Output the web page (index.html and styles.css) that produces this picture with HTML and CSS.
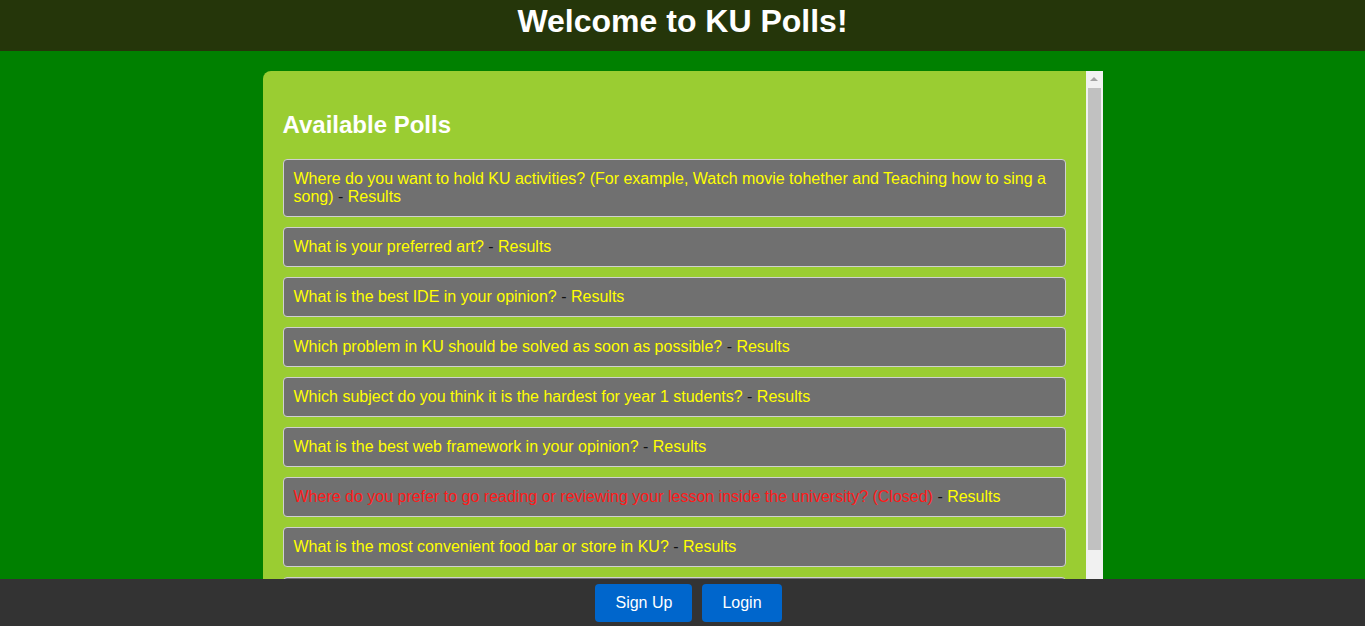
FILE: index.html
```html
<!DOCTYPE html>
<html lang="en">
<head>
<meta charset="utf-8">
<title>KU Polls</title>
<link rel="stylesheet" href="styles.css">
</head>
<body>
<header class="site-header">
  <h1 class="site-title">Welcome to KU Polls!</h1>
</header>
<main class="polls-box">
  <div class="polls-content">
    <h2 class="polls-heading">Available Polls</h2>
    <ul class="poll-list">
      <li class="poll-item"><a class="poll-link" href="#">Where do you want to hold KU activities? (For example, Watch movie tohether and Teaching how to sing a song)</a> - <a class="poll-link" href="#">Results</a></li>
      <li class="poll-item"><a class="poll-link" href="#">What is your preferred art?</a> - <a class="poll-link" href="#">Results</a></li>
      <li class="poll-item"><a class="poll-link" href="#">What is the best IDE in your opinion?</a> - <a class="poll-link" href="#">Results</a></li>
      <li class="poll-item"><a class="poll-link" href="#">Which problem in KU should be solved as soon as possible?</a> - <a class="poll-link" href="#">Results</a></li>
      <li class="poll-item"><a class="poll-link" href="#">Which subject do you think it is the hardest for year 1 students?</a> - <a class="poll-link" href="#">Results</a></li>
      <li class="poll-item"><a class="poll-link" href="#">What is the best web framework in your opinion?</a> - <a class="poll-link" href="#">Results</a></li>
      <li class="poll-item"><span class="poll-closed">Where do you prefer to go reading or reviewing your lesson inside the university? (Closed)</span> - <a class="poll-link" href="#">Results</a></li>
      <li class="poll-item"><a class="poll-link" href="#">What is the most convenient food bar or store in KU?</a> - <a class="poll-link" href="#">Results</a></li>
      <li class="poll-item"><a class="poll-link" href="#">What is your favourite place to relax in KU?</a> - <a class="poll-link" href="#">Results</a></li>
      <li class="poll-item"><a class="poll-link" href="#">Which club would you like to join?</a> - <a class="poll-link" href="#">Results</a></li>
    </ul>
  </div>
  <div class="scrollbar" aria-hidden="true">
    <div class="scroll-arrow"><span class="scroll-triangle"></span></div>
    <div class="scroll-thumb"></div>
  </div>
</main>
<footer class="site-footer">
  <a class="btn" href="#">Sign Up</a>
  <a class="btn" href="#">Login</a>
</footer>
</body>
</html>
```
FILE: styles.css
```css
html, body {
  margin: 0;
  padding: 0;
}
body {
  background: #008000;
  font-family: "Liberation Sans", Arial, sans-serif;
  height: 626px;
  overflow: hidden;
}
.site-header {
  background: #25360a;
  height: 51px;
  display: flex;
  justify-content: center;
  align-items: flex-start;
}
.site-title {
  margin: 0;
  padding-top: 3px;
  color: #fff;
  font-size: 32px;
  font-weight: bold;
  line-height: 37px;
}
.polls-box {
  width: 840px;
  margin: 20px auto 0;
  height: 555px;
  overflow: hidden;
  display: flex;
  background: #9acd32;
  border-radius: 8px 0 0 0;
}
.polls-content {
  flex: 1;
  overflow: hidden;
  padding: 20px 20px 20px 20px;
}
.scrollbar {
  width: 17px;
  flex: none;
  background: #f1f1f1;
  display: flex;
  flex-direction: column;
}
.scroll-arrow {
  height: 17px;
  display: flex;
  align-items: center;
  justify-content: center;
}
.scroll-triangle {
  width: 0;
  height: 0;
  border-left: 4px solid transparent;
  border-right: 4px solid transparent;
  border-bottom: 4px solid #a3a3a3;
  margin-top: -1px;
}
.scroll-thumb {
  height: 462px;
  margin: 0 2px;
  background: #c1c1c1;
}
.polls-heading {
  margin: 20px 0;
  color: #fff;
  font-size: 24px;
  font-weight: bold;
  line-height: 28px;
}
.poll-list {
  list-style: none;
  margin: 0;
  padding: 0;
  display: flex;
  flex-direction: column;
  gap: 10px;
}
.poll-item {
  background: #707070;
  border: 1px solid #d0d0d0;
  border-radius: 4px;
  padding: 10px;
  font-size: 16px;
  line-height: 18px;
  color: #111;
}
.poll-link {
  color: #ffff00;
  text-decoration: none;
}
.poll-closed {
  color: #ff1a1a;
}
.site-footer {
  position: fixed;
  left: 0;
  right: 0;
  bottom: 0;
  background: #333333;
  padding: 5px 0 4px 12px;
  display: flex;
  justify-content: center;
  gap: 10px;
}
.btn {
  background: #0066cc;
  color: #fff;
  text-decoration: none;
  font-size: 16px;
  line-height: 18px;
  padding: 10px 20px;
  border-radius: 4px;
}
```
